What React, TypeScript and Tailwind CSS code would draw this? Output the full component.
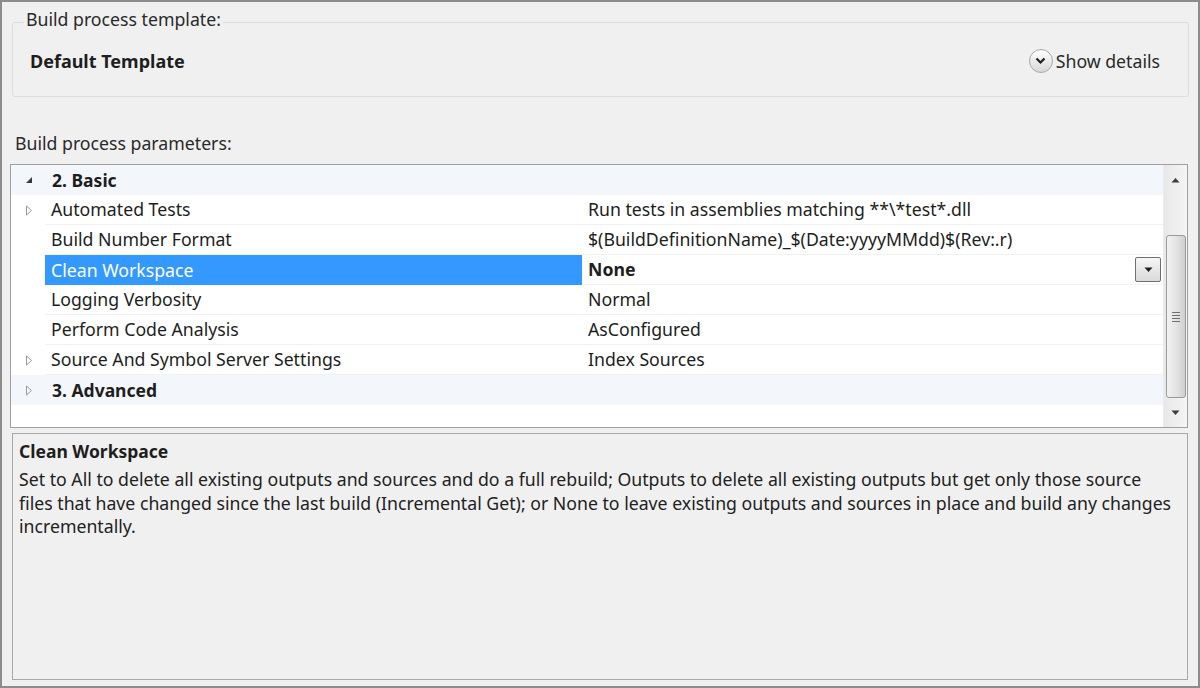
import React from 'react';

type Row =
  | { kind: 'cat'; label: string; open: boolean }
  | { kind: 'item'; label: string; value: string; expandable?: boolean; selected?: boolean };

const rows: Row[] = [
  { kind: 'cat', label: '2. Basic', open: true },
  { kind: 'item', label: 'Automated Tests', value: 'Run tests in assemblies matching **\\*test*.dll', expandable: true },
  { kind: 'item', label: 'Build Number Format', value: '$(BuildDefinitionName)_$(Date:yyyyMMdd)$(Rev:.r)' },
  { kind: 'item', label: 'Clean Workspace', value: 'None', selected: true },
  { kind: 'item', label: 'Logging Verbosity', value: 'Normal' },
  { kind: 'item', label: 'Perform Code Analysis', value: 'AsConfigured' },
  { kind: 'item', label: 'Source And Symbol Server Settings', value: 'Index Sources', expandable: true },
  { kind: 'cat', label: '3. Advanced', open: false },
];

function OpenArrow() {
  return (
    <svg width="8" height="8" viewBox="0 0 8 8">
      <path d="M7 1 L7 7 L1 7 Z" fill="#3a3a3a" />
    </svg>
  );
}

function ClosedArrow() {
  return (
    <svg width="8" height="11" viewBox="0 0 8 11">
      <path d="M1.5 1 L6.5 5.5 L1.5 10 Z" fill="none" stroke="#9a9a9a" strokeWidth="1" />
    </svg>
  );
}

function ScrollBar() {
  return (
    <div className="w-[24px] bg-gradient-to-r from-[#e8e8e8] to-[#f4f4f4] flex flex-col items-center border-l border-[#ececec]">
      <div className="h-[30px] w-full flex items-center justify-center">
        <svg width="9" height="6" viewBox="0 0 9 6">
          <path d="M0.5 5.5 L4.5 1 L8.5 5.5 Z" fill="#3a3a3a" />
        </svg>
      </div>
      <div className="h-[40px]" />
      <div className="h-[163px] w-[20px] rounded-[3px] border border-[#9a9a9a] bg-gradient-to-r from-[#f2f2f2] via-[#e4e4e4] to-[#cfcfcf] flex items-center justify-center">
        <div className="flex flex-col gap-[2px]">
          <div className="w-[8px] h-px bg-[#707070]" />
          <div className="w-[8px] h-px bg-[#707070]" />
          <div className="w-[8px] h-px bg-[#707070]" />
          <div className="w-[8px] h-px bg-[#707070]" />
        </div>
      </div>
      <div className="flex-1 w-full flex items-center justify-center">
        <svg width="9" height="6" viewBox="0 0 9 6">
          <path d="M0.5 0.5 L8.5 0.5 L4.5 5 Z" fill="#3a3a3a" />
        </svg>
      </div>
    </div>
  );
}

export default function App() {
  return (
    <div
      className="h-[688px] w-[1200px] bg-[#f0f0f0] border-2 border-[#8c8c8c] flex flex-col text-[#1e1e1e] text-[17.7px]"
      style={{ fontFamily: '"Noto Sans", "Open Sans", sans-serif' }}
    >
      {/* template group */}
      <fieldset className="block mt-[6px] ml-[10px] mr-[9px] h-[89px] border border-[#dcdcdc] rounded-[3px] pl-[17px] pr-[28px]">
        <legend className="ml-[-6px] px-[2px] pb-[6px] leading-[22px] text-[#2a2a2a]">Build process template:</legend>
        <div className="h-[50px] flex items-center justify-between">
          <span className="font-bold text-[18px]">Default Template</span>
          <div className="flex items-center gap-[3px]">
            <div className="w-[24px] h-[24px] rounded-full border border-[#a8a8a8] bg-gradient-to-b from-[#ffffff] to-[#d8d8d8] flex items-center justify-center">
              <svg width="11" height="8" viewBox="0 0 11 8">
                <path d="M1.5 1.5 L5.5 5.5 L9.5 1.5" fill="none" stroke="#1e1e1e" strokeWidth="2.2" />
              </svg>
            </div>
            <span className="text-[#2a2a2a]">Show details</span>
          </div>
        </div>
      </fieldset>

      <div className="mt-[35px] ml-[13px] leading-[22px] text-[#2a2a2a]">Build process parameters:</div>

      {/* property grid */}
      <div className="mt-[10px] ml-[8px] mr-[10px] h-[264px] border border-[#a0a0a0] bg-white flex">
        <div className="flex-1 flex flex-col">
          {rows.map((r) =>
            r.kind === 'cat' ? (
              <div key={r.label} className="h-[30px] bg-[#f3f6fb] flex items-center">
                <div className="w-[34px] flex items-center justify-center pl-[2px]">
                  {r.open ? <OpenArrow /> : <ClosedArrow />}
                </div>
                <span className="pl-[7px] font-bold text-[17.5px]">{r.label}</span>
              </div>
            ) : (
              <div key={r.label} className="h-[30px] grid grid-cols-[34px_537px_1fr]">
                <div className="flex items-center justify-center pl-[2px]">
                  {r.expandable && <ClosedArrow />}
                </div>
                <div
                  className={
                    r.selected
                      ? 'bg-[#3399ff] text-white flex items-center pl-[6px]'
                      : 'flex items-center pl-[6px] border-b border-[#f2f2f2]'
                  }
                >
                  {r.label}
                </div>
                <div className="flex items-center justify-between pl-[6px] pr-[2px] border-b border-[#f2f2f2]">
                  <span className={r.selected ? 'font-bold' : ''}>{r.value}</span>
                  {r.selected && (
                    <div className="w-[26px] h-[25px] border border-[#707070] rounded-[2px] bg-gradient-to-b from-[#f6f6f6] to-[#dadada] flex items-center justify-center">
                      <svg width="9" height="6" viewBox="0 0 9 6">
                        <path d="M0.5 0.5 L8.5 0.5 L4.5 5 Z" fill="#1e1e1e" />
                      </svg>
                    </div>
                  )}
                </div>
              </div>
            )
          )}
        </div>
        <ScrollBar />
      </div>

      {/* description panel */}
      <div className="mt-[5px] ml-[10px] mr-[10px] h-[247px] border border-[#a8a8a8] bg-[#f0f0f0] px-[6px] pt-[5px]">
        <div className="font-bold leading-[24px] text-[17.5px]">Clean Workspace</div>
        <p className="mt-[5px] leading-[23.5px] text-[#222] whitespace-nowrap">
          Set to All to delete all existing outputs and sources and do a full rebuild; Outputs to delete all existing outputs but get only those source
          <br />
          files that have changed since the last build (Incremental Get); or None to leave existing outputs and sources in place and build any changes
          <br />
          incrementally.
        </p>
      </div>
    </div>
  );
}
